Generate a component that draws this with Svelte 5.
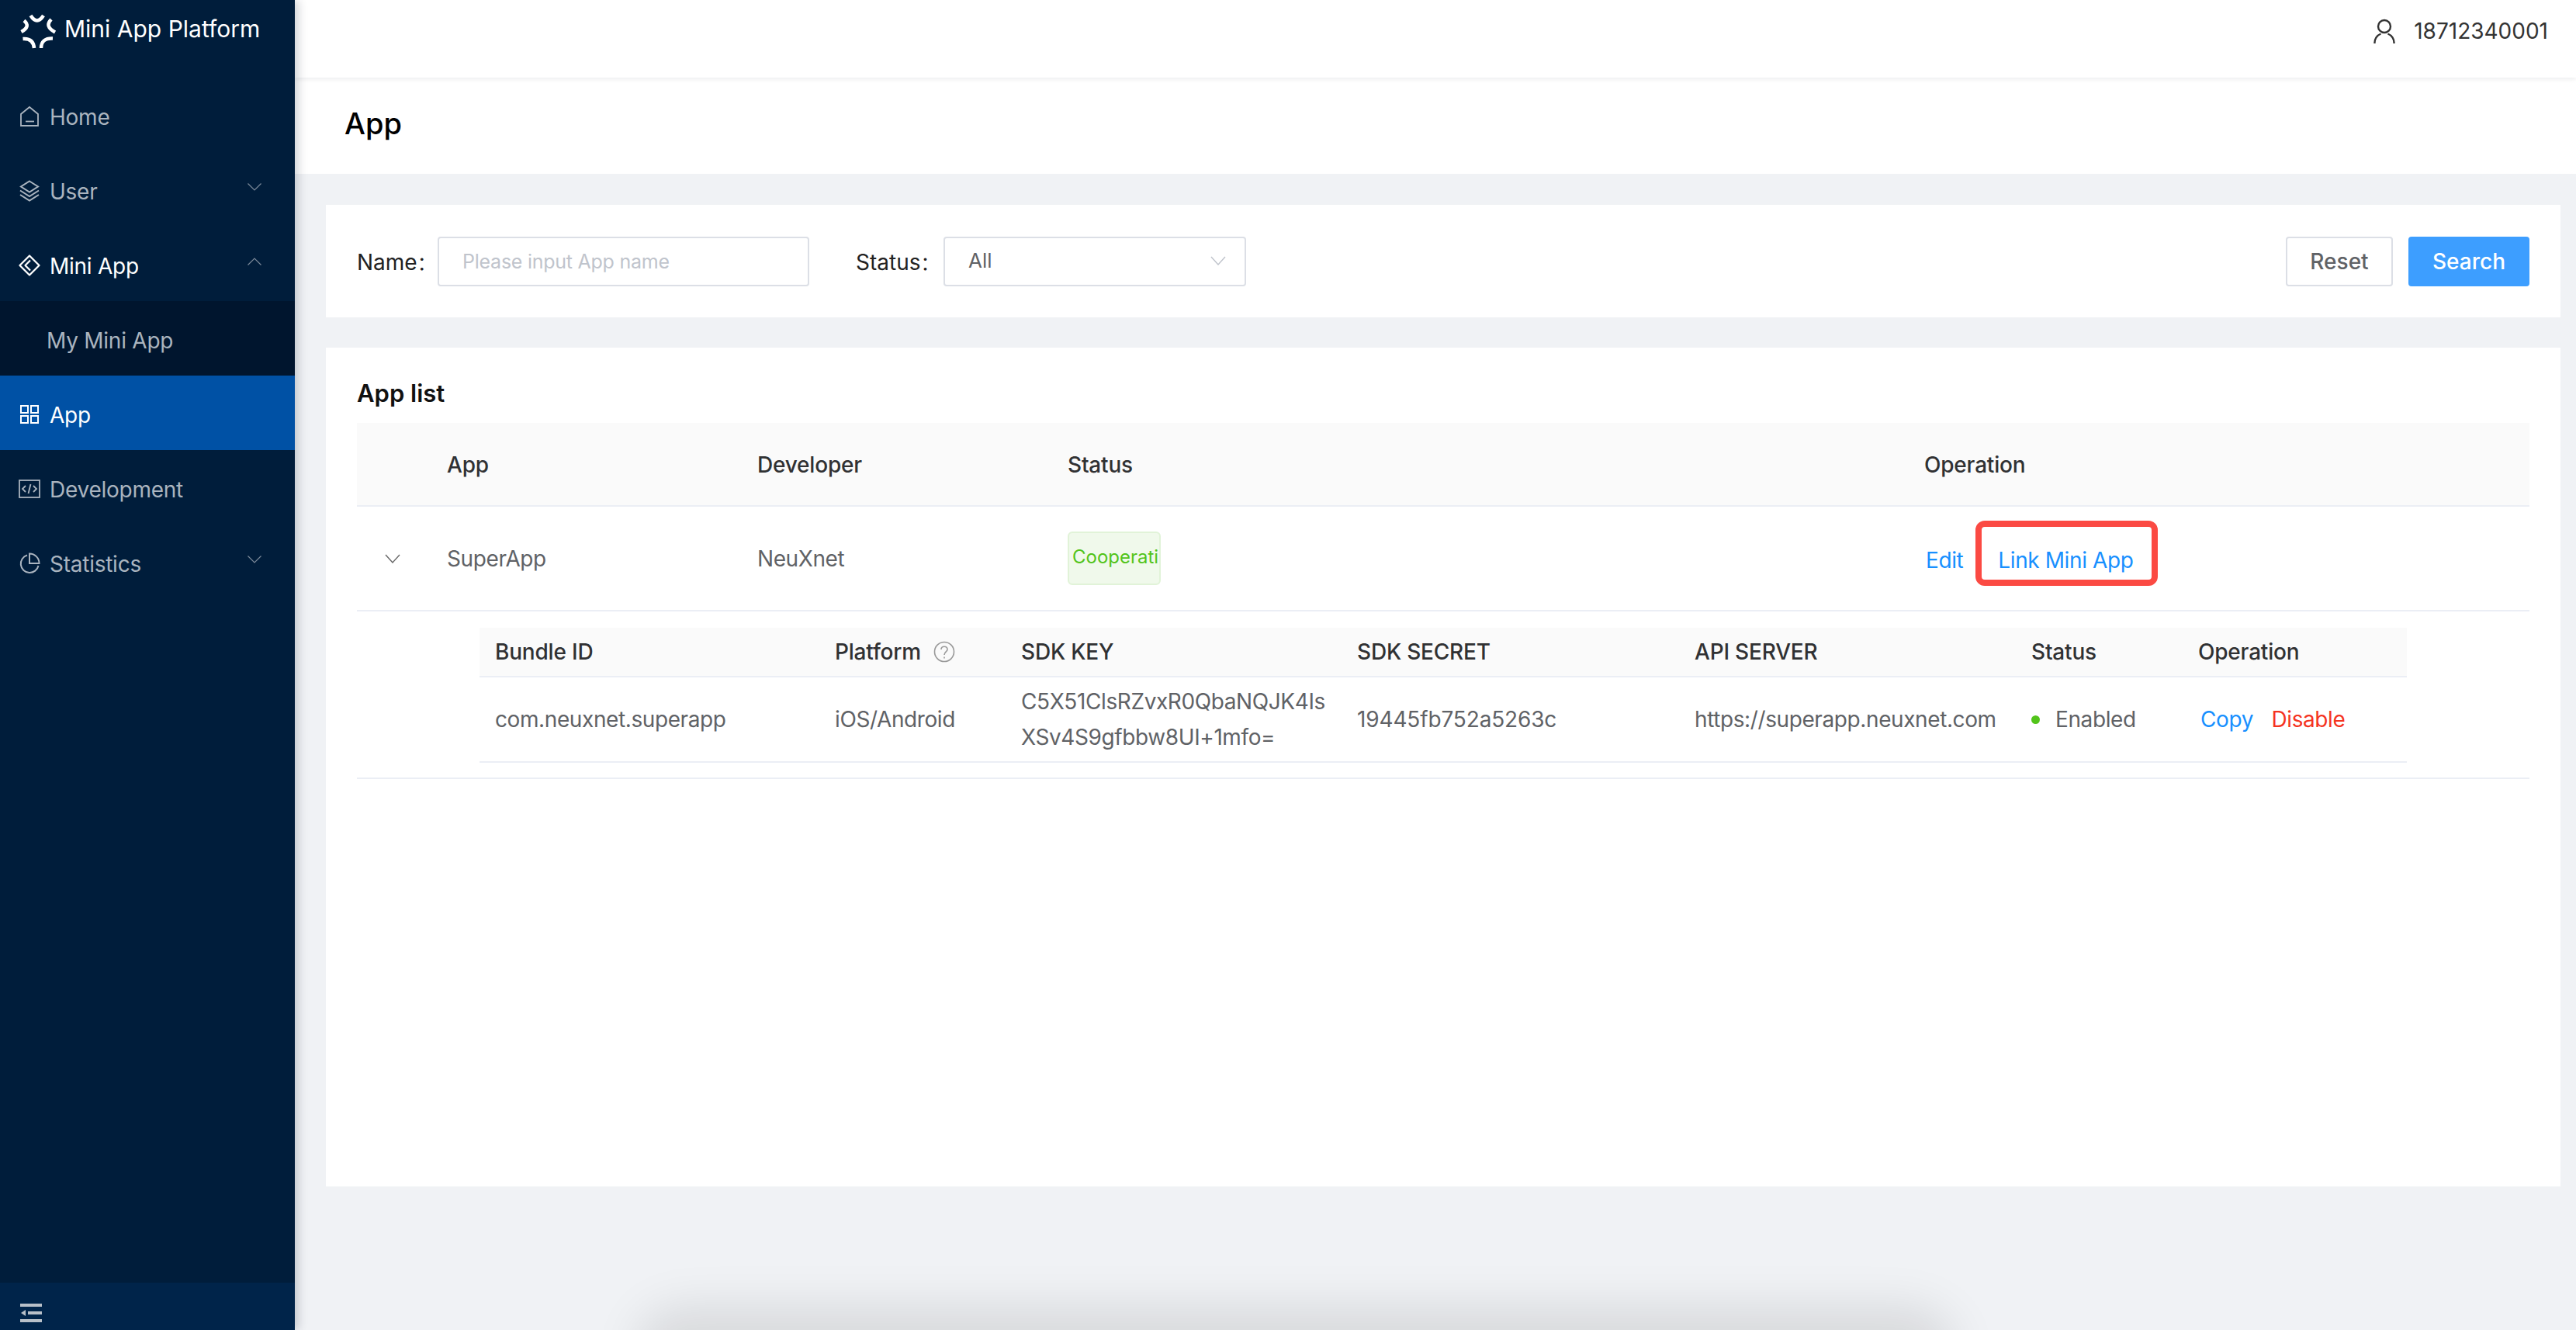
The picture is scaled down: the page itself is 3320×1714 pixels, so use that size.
<script>
  const menu = [
    { label: 'Home', icon: 'home' },
    { label: 'User', icon: 'layers', arrow: 'down' },
    { label: 'Mini App', icon: 'code', arrow: 'up', open: true },
    { label: 'My Mini App', sub: true },
    { label: 'App', icon: 'grid', active: true },
    { label: 'Development', icon: 'dev' },
    { label: 'Statistics', icon: 'pie', arrow: 'down' }
  ];
</script>

<div class="layout">
  <aside class="sider">
    <div class="logo">
      <svg width="46" height="48" viewBox="0 0 46 48" fill="none" stroke="#fff" stroke-width="4.5">
        <path d="M13.500 4Q21.700 17 30 4" />
        <path d="M5 10.500Q14 18 1.500 25" />
        <path d="M40 9Q31 18 45 25.500" />
        <path d="M3.500 34Q17 33 18 46" />
        <path d="M42 33.500Q27 33 27 46" />
      </svg>
      <span>Mini App Platform</span>
    </div>
    <nav class="menu">
      {#each menu as item}
        <div class="item" class:sub={item.sub} class:active={item.active} class:open={item.open}>
          {#if item.icon === 'home'}
            <svg class="ico" viewBox="0 0 28 28" fill="none" stroke="currentColor" stroke-width="1.800">
              <path d="M3 11 14 2l11 9v15H3z" /><path d="M9 20.500h11" />
            </svg>
          {:else if item.icon === 'layers'}
            <svg class="ico" viewBox="0 0 28 28" fill="none" stroke="currentColor" stroke-width="2">
              <path d="M14 1.500 25 8.500 14 15.500 3 8.500z" /><path d="M2 13.500 14 21l12-7.500" /><path d="M2 19 14 26.500 26 19" />
            </svg>
          {:else if item.icon === 'code'}
            <svg class="ico" viewBox="0 0 28 28" fill="none" stroke="currentColor" stroke-width="2.200" stroke-linejoin="round">
              <path d="M14 1.500 26.500 14 14 26.500 1.500 14z" /><path d="M15 7.500 8.500 14 15 20.500" />
            </svg>
          {:else if item.icon === 'grid'}
            <svg class="ico" viewBox="0 0 28 28" fill="none" stroke="currentColor" stroke-width="2">
              <rect x="3" y="3" width="9" height="9" /><rect x="16" y="3" width="9" height="9" />
              <rect x="3" y="16" width="9" height="9" /><rect x="16" y="16" width="9" height="9" />
            </svg>
          {:else if item.icon === 'dev'}
            <svg class="ico" viewBox="0 0 28 28" fill="none" stroke="currentColor" stroke-width="1.800">
              <rect x="1" y="3" width="26" height="22" /><path d="M9 10l-4 4 4 4" /><path d="M19 10l4 4-4 4" /><path d="M15.500 8l-3 12" />
            </svg>
          {:else if item.icon === 'pie'}
            <svg class="ico" viewBox="0 0 28 28" fill="none" stroke="currentColor" stroke-width="2">
              <path d="M11 3.500A11.500 11.500 0 1 0 25.500 17" /><path d="M14 1.500A12.500 12.500 0 0 1 26.500 14H14z" />
            </svg>
          {/if}
          <span class="label">{item.label}</span>
          {#if item.arrow}
            <svg class="arrow" class:up={item.arrow === 'up'} viewBox="0 0 18 10" fill="none" stroke="currentColor" stroke-width="1.200">
              <path d="M0.500 0.500 9 9l8.500-8.500" />
            </svg>
          {/if}
        </div>
      {/each}
    </nav>
    <div class="collapse">
      <svg width="28" height="24" viewBox="0 0 28 24" fill="none" stroke="currentColor" stroke-width="4">
        <path d="M0 2h28" /><path d="M10 12h18" /><path d="M0 22h28" /><path d="M1 12 7 8v8z" fill="currentColor" stroke="none" />
      </svg>
    </div>
  </aside>

  <div class="main">
    <header class="topbar">
      <svg width="28" height="32" viewBox="0 0 28 32" fill="none" stroke="#333" stroke-width="2.400">
        <circle cx="14" cy="10" r="8" /><path d="M1.500 32a12.500 12.500 0 0 1 8-12.500" /><path d="M26.500 32a12.500 12.500 0 0 0-8-12.500" />
      </svg>
      <span>18712340001</span>
    </header>
    <div class="title">App</div>

    <div class="content">
      <section class="card filter">
        <label for="app-name">Name<span class="colon">：</span></label>
        <input id="app-name" placeholder="Please input App name" />
        <span class="flabel">Status<span class="colon">：</span></span>
        <div class="select">
          <span>All</span>
          <svg width="20" height="12" viewBox="0 0 20 12" fill="none" stroke="#bfc3cb" stroke-width="1.400"><path d="M1 1l9 10 9-10" /></svg>
        </div>
        <div class="buttons">
          <button class="btn">Reset</button>
          <button class="btn primary">Search</button>
        </div>
      </section>

      <section class="card list">
        <h2>App list</h2>
        <div class="outer head">
          <div></div>
          <div>App</div>
          <div>Developer</div>
          <div>Status</div>
          <div>Operation</div>
        </div>
        <div class="outer row">
          <div class="expand">
            <svg width="20" height="12" viewBox="0 0 20 12" fill="none" stroke="#666" stroke-width="1.400"><path d="M1 1l9 10 9-10" /></svg>
          </div>
          <div>SuperApp</div>
          <div>NeuXnet</div>
          <div><span class="tag">Cooperati</span></div>
          <div class="ops main-ops">
            <a href="#edit">Edit</a>
            <a class="boxed" href="#link">Link Mini App</a>
          </div>
        </div>
        <div class="expanded">
          <div class="inner head">
            <div>Bundle ID</div>
            <div class="platform">Platform
              <svg width="28" height="28" viewBox="0 0 28 28" fill="none" stroke="#999" stroke-width="1.600">
                <circle cx="14" cy="14" r="12.500" /><path d="M10 11c0-5 8-5 8 0 0 3-4 3-4 7" /><path d="M14 20.500v2" />
              </svg>
            </div>
            <div>SDK KEY</div>
            <div>SDK SECRET</div>
            <div>API SERVER</div>
            <div>Status</div>
            <div>Operation</div>
          </div>
          <div class="inner row">
            <div>com.neuxnet.superapp</div>
            <div>iOS/Android</div>
            <div class="key">C5X51ClsRZvxR0QbaNQJK4Is<br />XSv4S9gfbbw8UI+1mfo=</div>
            <div class="hex">19445fb752a5263c</div>
            <div>https://superapp.neuxnet.com</div>
            <div class="state"><i></i>Enabled</div>
            <div class="ops small">
              <a href="#copy">Copy</a>
              <a class="danger" href="#disable">Disable</a>
            </div>
          </div>
        </div>
      </section>
      <div class="window-shadow"></div>
    </div>
  </div>
</div>

<style>
  :global(body) {
    margin: 0;
    font-family: Inter, "Liberation Sans", sans-serif;
  }

  .layout {
    display: flex;
    width: 3320px;
    height: 1714px;
    overflow: hidden;
    background: #f0f2f5;
  }

  .sider {
    position: relative;
    z-index: 2;
    display: flex;
    flex-direction: column;
    flex: 0 0 380px;
    background: #001d3b;
    box-shadow: 4px 0 12px rgba(0, 21, 41, 0.2);
  }

  .logo {
    display: flex;
    align-items: center;
    gap: 11px;
    height: 74px;
    margin-bottom: 26px;
    padding-left: 26px;
    color: #fff;
    font-size: 30px;
  }

  .logo svg {
    margin-top: 6px;
  }

  .menu {
    flex: 1;
  }

  .item {
    display: flex;
    align-items: center;
    height: 96px;
    padding-left: 24px;
    color: #aab4bf;
    font-size: 28px;
    letter-spacing: -0.25px;
  }

  .item.open {
    color: #fff;
  }

  .item.active {
    background: #0051a5;
    color: #fff;
  }

  .item.sub {
    padding-left: 60px;
    background: #00152e;
  }

  .ico {
    flex: 0 0 28px;
    width: 28px;
    height: 28px;
    margin: 4px 12px 0 0;
  }

  .label {
    padding-top: 6px;
  }

  .arrow {
    width: 18px;
    height: 10px;
    margin-left: auto;
    margin-right: 43px;
    margin-bottom: 6px;
    color: #7d8b9b;
  }

  .arrow.up {
    transform: rotate(180deg);
  }

  .collapse {
    display: flex;
    align-items: flex-start;
    height: 61px;
    padding: 27px 0 0 26px;
    box-sizing: border-box;
    background: #00244a;
    color: #b8c0c9;
  }

  .main {
    flex: 1;
    min-width: 0;
  }

  .topbar {
    position: relative;
    display: flex;
    align-items: center;
    justify-content: flex-end;
    gap: 24px;
    height: 100px;
    padding: 0 36px 20px 0;
    box-sizing: border-box;
    background: #fff;
    box-shadow: 0 2px 6px rgba(0, 21, 41, 0.08);
    color: #333;
    font-size: 28px;
  }

  .title {
    display: flex;
    align-items: center;
    height: 124px;
    padding: 0 0 6px 64px;
    box-sizing: border-box;
    background: #fff;
    color: #000;
    font-size: 38px;
    font-weight: 500;
  }

  .content {
    position: relative;
    padding: 40px 20px 0 40px;
    height: 1490px;
    box-sizing: border-box;
  }

  .card {
    background: #fff;
  }

  .filter {
    display: flex;
    align-items: center;
    height: 145px;
    padding: 0 40px;
    color: #222;
    font-size: 28px;
  }

  .filter label,
  .flabel {
    display: flex;
    padding-top: 2px;
    white-space: nowrap;
  }

  .filter label {
    width: 104px;
  }

  .colon {
    font-family: "Noto Sans CJK SC", sans-serif;
    font-size: 24px;
    line-height: 34px;
  }

  .filter input {
    width: 479px;
    height: 64px;
    padding: 0 30px;
    box-sizing: border-box;
    border: 2px solid #dcdfe6;
    border-radius: 4px;
    font: inherit;
    font-size: 25px;
    letter-spacing: -0.25px;
    outline: none;
  }

  .filter input::placeholder {
    color: #c0c4cc;
  }

  .flabel {
    width: 113px;
    margin-left: 60px;
  }

  .select {
    display: flex;
    align-items: center;
    justify-content: space-between;
    width: 390px;
    height: 64px;
    padding: 0 24px 2px 30px;
    box-sizing: border-box;
    border: 2px solid #dcdfe6;
    border-radius: 4px;
    color: #606266;
    font-size: 26px;
  }

  .buttons {
    display: flex;
    gap: 20px;
    margin-left: auto;
  }

  .btn {
    width: 138px;
    height: 64px;
    border: 2px solid #dcdfe6;
    border-radius: 4px;
    background: #fff;
    color: #606266;
    font: inherit;
    font-weight: 500;
  }

  .btn.primary {
    width: 156px;
    border-color: #3d9eff;
    background: #3d9eff;
    color: #fff;
  }

  .list {
    height: 1081px;
    margin-top: 39px;
    padding: 0 40px;
  }

  h2 {
    display: flex;
    align-items: center;
    height: 97px;
    margin: 0;
    padding-top: 20px;
    box-sizing: border-box;
    color: #111;
    font-size: 31px;
    font-weight: 600;
  }

  .outer,
  .inner {
    display: grid;
    align-items: center;
    box-sizing: border-box;
    color: #606266;
    font-size: 28px;
    letter-spacing: -0.4px;
    border-bottom: 2px solid #ebeef5;
  }

  .outer {
    grid-template-columns: 116px 400px 400px 1104px 1fr;
  }

  .inner {
    grid-template-columns: 438px 240px 433px 435px 434px 215px 1fr;
    padding-left: 20px;
  }

  .head {
    background: #fafafa;
    color: #303133;
    font-weight: 500;
    letter-spacing: -0.2px;
  }

  .outer.head {
    height: 108px;
    padding-top: 2px;
  }

  .outer.row {
    height: 135px;
  }

  .expand {
    display: flex;
    padding-left: 36px;
  }

  .tag {
    display: block;
    box-sizing: border-box;
    width: 120px;
    height: 69px;
    padding: 0 4px;
    border: 2px solid #e1f3d8;
    border-radius: 6px;
    background: #f0f9eb;
    color: #52c41a;
    font-size: 24px;
    letter-spacing: 0;
    line-height: 62px;
    white-space: nowrap;
  }

  .ops a {
    color: #1890ff;
    text-decoration: none;
  }

  .main-ops {
    display: flex;
    align-items: center;
    gap: 45px;
    padding: 5px 0 0 2px;
  }

  .ops .boxed {
    position: relative;
  }

  /* the red annotation sits a little above the link it marks */
  .ops .boxed::after {
    content: "";
    position: absolute;
    top: -34px;
    bottom: -16px;
    left: -29px;
    right: -32px;
    border: 8px solid #fb4a43;
    border-radius: 12px;
    pointer-events: none;
  }

  .ops.small {
    padding-left: 3px;
  }

  .ops.small a + a {
    margin-left: 16px;
  }

  .ops .danger {
    color: #f5341f;
  }

  .expanded {
    height: 216px;
    padding: 21px 158px 0 158px;
    box-sizing: border-box;
    border-bottom: 2px solid #ebeef5;
  }

  .inner.head {
    height: 64px;
  }

  .inner.row {
    height: 110px;
  }

  .platform {
    display: flex;
    align-items: center;
    gap: 16px;
  }

  .key {
    line-height: 46px;
  }

  .hex {
    letter-spacing: -0.15px;
  }

  .state {
    display: flex;
    align-items: center;
  }

  .state i {
    width: 11px;
    height: 11px;
    margin-right: 20px;
    border-radius: 50%;
    background: #52c41a;
  }

  .window-shadow {
    position: absolute;
    left: 470px;
    bottom: -60px;
    width: 1640px;
    height: 60px;
    border-radius: 30px;
    box-shadow: 0 0 60px 30px rgba(0, 0, 0, 0.1);
  }
</style>
